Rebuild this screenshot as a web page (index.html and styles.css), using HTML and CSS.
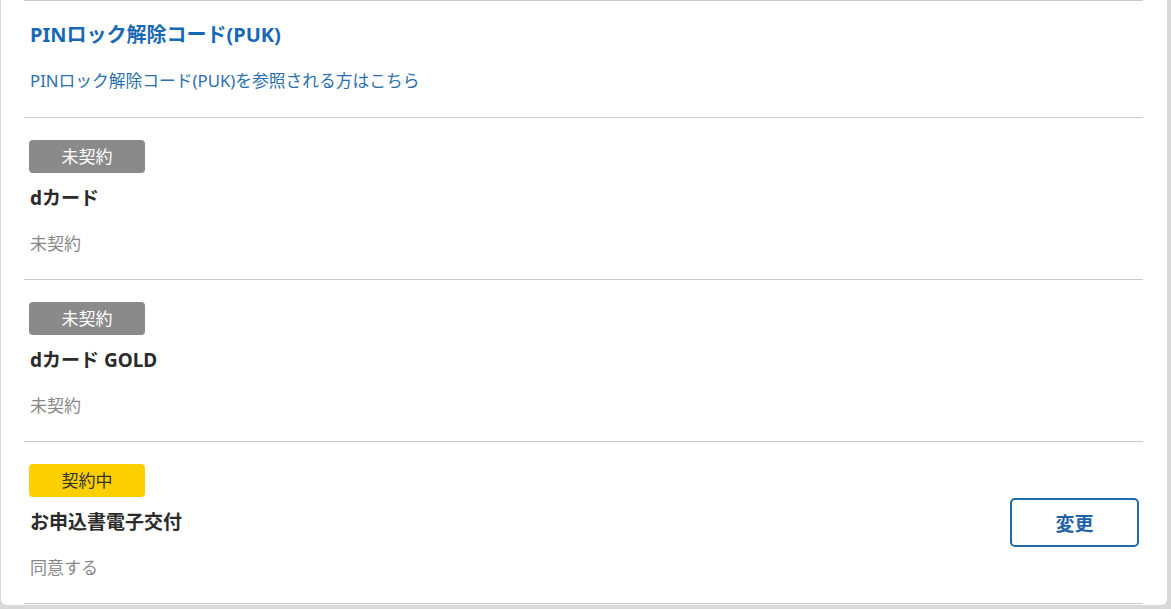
FILE: index.html
```html
<!DOCTYPE html>
<html lang="ja">
<head>
<meta charset="utf-8">
<link rel="stylesheet" href="styles.css">
</head>
<body>
<div class="card">
  <section class="row">
    <div class="content">
      <h2 class="puk-title">PINロック解除コード(PUK)</h2>
      <a class="puk-link" href="#">PINロック解除コード(PUK)を参照される方はこちら</a>
    </div>
  </section>
  <section class="row">
    <div class="content">
      <span class="badge badge-off">未契約</span>
      <h3 class="item-title">dカード</h3>
      <p class="item-value">未契約</p>
    </div>
  </section>
  <section class="row">
    <div class="content">
      <span class="badge badge-off">未契約</span>
      <h3 class="item-title">dカード GOLD</h3>
      <p class="item-value">未契約</p>
    </div>
  </section>
  <section class="row last">
    <div class="content">
      <span class="badge badge-on">契約中</span>
      <h3 class="item-title">お申込書電子交付</h3>
      <p class="item-value">同意する</p>
    </div>
    <button class="change-btn" type="button">変更</button>
  </section>
</div>
</body>
</html>
```

FILE: styles.css
```css
html, body {
  margin: 0;
  padding: 0;
}
body {
  background: #d9d9d9;
  height: 609px;
  overflow: hidden;
  font-family: "Noto Sans", "Noto Sans CJK JP", sans-serif;
  color: #333;
}
.card {
  background: #fff;
  margin: 0 4px 0 1px;
  padding: 0 24px 0 23px;
  border-radius: 0 0 6px 6px;
  height: 605px;
  box-sizing: border-box;
}
.row {
  border-top: 1px solid #cbcbcb;
  display: flex;
  align-items: center;
  justify-content: space-between;
  padding: 22px 4px 24px 6px;
  height: 162px;
  box-sizing: border-box;
}
.row:first-child {
  height: 117px;
  padding-top: 21px;
}
.row.last {
  border-bottom: 1px solid #cbcbcb;
  height: 163px;
}
.content {
  display: flex;
  flex-direction: column;
  align-items: flex-start;
}
.puk-title {
  margin: 0;
  font-size: 20px;
  line-height: 26px;
  font-weight: 700;
  color: #1768b5;
}
.puk-link {
  margin-top: 21px;
  font-size: 16.75px;
  line-height: 24px;
  color: #2a6fae;
  text-decoration: none;
}
.badge {
  display: flex;
  align-items: center;
  justify-content: center;
  width: 116px;
  height: 33px;
  margin-left: -1px;
  border-radius: 4px;
  font-size: 17px;
  line-height: 1;
}
.badge-off {
  background: #8a8a8a;
  color: #fff;
}
.badge-on {
  background: #fcd000;
  color: #333;
}
.item-title {
  margin: 12px 0 0;
  font-size: 19px;
  line-height: 26px;
  font-weight: 700;
  color: #2b2b2b;
}
.item-value {
  margin: 21px 0 0;
  font-size: 17px;
  line-height: 24px;
  color: #888;
}
.change-btn {
  width: 129px;
  height: 49px;
  border: 2px solid #1f6aa8;
  border-radius: 5px;
  background: #fff;
  color: #1f62a8;
  font-family: "Noto Sans CJK JP", sans-serif;
  font-size: 19px;
  font-weight: 700;
  margin-top: 2px;
  cursor: pointer;
}
```
